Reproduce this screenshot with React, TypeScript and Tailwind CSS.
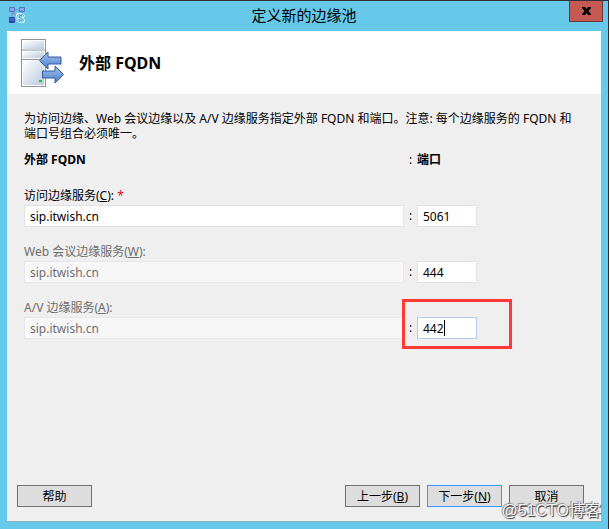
import type { ReactNode } from "react"

type FieldProps = {
  id: string
  label: ReactNode
  fqdn: string
  port: string
  disabled?: boolean
  required?: boolean
  active?: boolean
}

function PoolIcon() {
  return (
    <svg className="h-4 w-4" viewBox="0 0 16 16" aria-hidden="true">
      <path d="M3 4v9M3.500 5l5 5M13 4v4M5 3h6M3 13h6" stroke="#7f93c4" strokeWidth="1.2" fill="none" />
      <rect x="0" y="0" width="6" height="5" rx="1" fill="#5673bd" />
      <rect x="1" y="1" width="4" height="3" fill="#86a6ef" />
      <rect x="10" y="0" width="6" height="5" rx="1" fill="#5673bd" />
      <rect x="11" y="1" width="4" height="3" fill="#86a6ef" />
      <rect x="0" y="10" width="6" height="6" rx="1" fill="#2a4aa0" />
      <rect x="1" y="11" width="4" height="3" fill="#3f6bd0" />
      <circle cx="9.8" cy="9" r="3" fill="#ffffff" />
      <circle cx="13.200" cy="13" r="3" fill="#ffffff" />
      <circle cx="11.5" cy="11" r="4.8" fill="#ffffff" />
      <circle cx="11.5" cy="11" r="3.9" fill="#ffffff" stroke="#2bb4ea" strokeWidth="0.9" />
      <path
        d="M13.300 9.500c-.4-1.100-3.500-1.200-3.500.2 0 1.500 3.500.9 3.500 2.500 0 1.500-3.200 1.400-3.700.1"
        stroke="#109fdd"
        strokeWidth="1.2"
        fill="none"
      />
    </svg>
  )
}

function ServerIcon() {
  return (
    <svg className="h-12 w-11" viewBox="0 0 44 48" aria-hidden="true">
      <defs>
        <linearGradient id="server" x1="0" y1="0" x2="1" y2="1">
          <stop offset="0" stopColor="#ffffff" />
          <stop offset="1" stopColor="#b9cadf" />
        </linearGradient>
        <linearGradient id="arrow" x1="0" y1="0" x2="0" y2="1">
          <stop offset="0" stopColor="#a4c2ee" />
          <stop offset="1" stopColor="#4b7fcd" />
        </linearGradient>
      </defs>
      <rect x="1.5" y="0.5" width="24" height="47" fill="#ffffff" stroke="#8e959e" />
      <rect x="3" y="2" width="21" height="8" fill="url(#server)" />
      <rect x="3" y="12" width="21" height="7" fill="url(#server)" />
      <rect x="3" y="22" width="21" height="24" fill="url(#server)" />
      <path d="M2 11h23M2 20.5h23" stroke="#8e959e" />
      <rect x="19" y="41" width="3" height="2" fill="#12cf1b" />
      <path
        d="M19.5 21.5l8.500-8.500v5h13v7h-13v5z"
        fill="url(#arrow)"
        stroke="#335b9c"
      />
      <path
        d="M43.500 35.500l-8.500-8.500v5h-12.500v7h12.500v5z"
        fill="url(#arrow)"
        stroke="#335b9c"
      />
    </svg>
  )
}

function Field({ id, label, fqdn, port, disabled, required, active }: FieldProps) {
  return (
    <div className="mb-4">
      <label
        htmlFor={id}
        className={disabled ? "block leading-[18px] text-[#6d6d6d]" : "block leading-[18px]"}
      >
        {label}
        {required && <span className="text-red-600"> *</span>}
      </label>

      <div className="grid grid-cols-[1fr_13px_60px] items-center">
        <input
          id={id}
          type="text"
          defaultValue={fqdn}
          disabled={disabled}
          className="h-[22px] w-full min-w-0 border border-[#e0e1e8] bg-white px-[5px] disabled:border-[#e6e7ea] disabled:bg-[#f7f7f7] disabled:text-[#6d6d6d]"
        />
        <span className="text-center">:</span>
        <div className="relative">
          <input
            type="text"
            aria-label="端口"
            defaultValue={port}
            className={
              active
                ? "block h-[22px] w-full border border-[#b3cce6] bg-white px-[5px] outline-none"
                : "block h-[22px] w-full border border-[#e0e1e8] bg-white px-[5px] outline-none"
            }
          />
          {active && (
            <>
              <span className="absolute top-[3px] left-[27px] h-4 w-px bg-black" />
              <span className="pointer-events-none absolute -top-[18px] -left-[15px] h-[50px] w-[110px] border-3 border-[#ff3838]" />
            </>
          )}
        </div>
      </div>
    </div>
  )
}

export default function App() {
  const button = "h-[22px] w-[75px] border border-[#707070] bg-[#dddddd] pt-0.5 leading-[18px]"

  return (
    <div className="flex min-h-screen bg-white pr-px font-['Noto_Sans','Noto_Sans_CJK_SC',sans-serif] text-[12px] text-black">
      <div className="flex flex-1 flex-col border-t border-r border-[#2e3138] bg-[#66c9ea]">

        <header className="grid h-[30px] shrink-0 grid-cols-[1fr_auto_1fr] items-start px-[5px]">
          <div className="pt-1.5 pl-1">
            <PoolIcon />
          </div>
          <h1 className="text-[15px] leading-[29px]">定义新的边缘池</h1>
          <button
            type="button"
            aria-label="关闭"
            className="flex h-[21px] w-[34px] items-center justify-center justify-self-end border border-t-0 border-[#69373a] bg-[#c45a52]"
          >
            <svg className="h-2 w-[9px]" viewBox="0 0 9 8" aria-hidden="true">
              <path d="M0 0h3l1.500 2 1.500-2h3v1l-2.500 3 2.500 3v1h-3l-1.500-2-1.500 2h-3v-1l2.500-3-2.500-3z" />
            </svg>
          </button>
        </header>

        <main className="mx-[7px] mb-[7px] flex flex-1 flex-col border-b border-[#8fb4c2] bg-[#efefef]">
          <div className="flex h-[63px] items-center gap-[15px] bg-white pl-[13px]">
            <ServerIcon />
            <h2 className="text-[16px] font-bold">外部 FQDN</h2>
          </div>

          <form className="flex-1 px-[17px] pt-[17px]">
            <p className="pr-2 leading-[15px]">
              为访问边缘、Web 会议边缘以及 A/V 边缘服务指定外部 FQDN 和端口。注意: 每个边缘服务的 FQDN 和端口号组合必须唯一。
            </p>

            <div className="mr-[107px]">
              <div className="mt-[11px] mb-[19px] grid grid-cols-[1fr_13px_60px] leading-4 font-bold">
                <span>外部 FQDN</span>
                <span className="text-center font-normal">:</span>
                <span>端口</span>
              </div>

              <Field id="access" label={<>访问边缘服务(<u>C</u>):</>} fqdn="sip.itwish.cn" port="5061" required />
              <Field id="web" label={<>Web 会议边缘服务(<u>W</u>):</>} fqdn="sip.itwish.cn" port="444" disabled />
              <Field id="av" label={<>A/V 边缘服务(<u>A</u>):</>} fqdn="sip.itwish.cn" port="442" disabled active />
            </div>
          </form>

          <footer className="relative flex gap-[7px] pr-[17px] pb-3.5 pl-2.5">
            <button type="button" className={button}>帮助</button>
            <div className="flex-1" />
            <button type="button" className={button}>上一步(<u>B</u>)</button>
            <button
              type="button"
              className="h-[22px] w-[75px] border border-[#3399ff] bg-[#dddddd] pt-0.5 leading-[18px]"
            >
              下一步(<u>N</u>)
            </button>
            <button type="button" className={button}>取消</button>
            <span className="pointer-events-none absolute right-0 bottom-0 font-['Liberation_Sans','Noto_Sans_CJK_SC',sans-serif] text-[16px] leading-5 whitespace-nowrap text-[#f4f4f4] [text-shadow:1px_1px_1px_#333,-1px_-1px_1px_#888]">
              @51CTO博客
            </span>
          </footer>
        </main>

      </div>
    </div>
  )
}
